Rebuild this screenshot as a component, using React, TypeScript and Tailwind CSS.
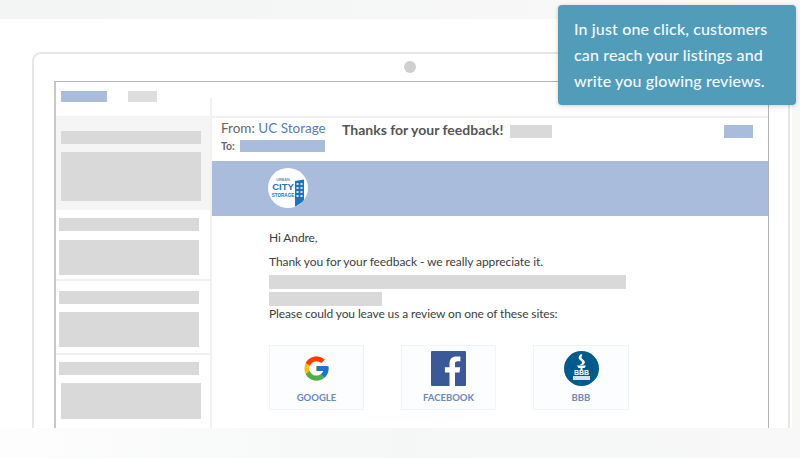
import { FcGoogle } from 'react-icons/fc';

const font = { sans: 'font-["Lato","Noto_Sans",sans-serif]' };

function Bar({ className }: { className: string }) {
  return <div className={`bg-[#d9d9d9] ${className}`} />;
}

function SidebarRow({ className, boxClass }: { className: string; boxClass: string }) {
  return (
    <div className={`flex flex-col border-b-2 border-[#f0f0f0] ${className}`}>
      <Bar className="h-[13px] w-[140px]" />
      <Bar className={boxClass} />
    </div>
  );
}

function FacebookIcon() {
  return (
    <svg viewBox="0 0 35 35" className="w-[35px] h-[35px]">
      <rect width="35" height="35" rx="1" fill="#3b5998" />
      <path d="M24 35V21.5h4.5l.7-5.3H24v-3.3c0-1.5.4-2.6 2.600-2.600h2.800V5.600C29 5.500 27.300 5.400 25.300 5.400c-4.100 0-6.800 2.500-6.800 7v3.800h-4.600v5.300h4.600V35z" fill="#fff" />
    </svg>
  );
}

function BbbIcon() {
  return (
    <svg viewBox="0 0 35 35" className="w-[35px] h-[35px]">
      <circle cx="17.500" cy="17.500" r="17.500" fill="#005a8c" />
      <path d="M17 3c-2 2-3 3-2 5 1 1.500 3 2 3 3.500 0 1-1 2-2.500 2.500h3c2-1 3-2.500 2-4-1-1.500-3-2-3-3.500 0-1 .5-2 1-2.500z" fill="#fff" />
      <path d="M13 14.500h9l-1.500 2.500h-6z" fill="#fff" />
      <rect x="16.500" y="16.500" width="2" height="2.500" fill="#fff" />
      <text x="17.500" y="24" textAnchor="middle" fontSize="7" fontWeight="700" fill="#fff" fontFamily="Liberation Sans, sans-serif">BBB</text>
      <rect x="9" y="25" width="17" height="4" fill="#d5e3ec" />
    </svg>
  );
}

function SiteCard({ label, icon, width }: { label: string; icon: React.ReactNode; width: string }) {
  return (
    <div className={`h-[65px] ${width} border border-[#eef4fa] bg-[#fbfdff] flex flex-col items-center pt-[5px]`}>
      <div className="h-[35px] flex items-center justify-center">{icon}</div>
      <span className="mt-[5px] text-[9.5px] leading-[14px] font-bold text-[#6d88b9]">{label}</span>
    </div>
  );
}

function CityLogo() {
  return (
    <div className="w-[40px] h-[40px] rounded-full bg-white overflow-hidden">
      <svg viewBox="0 0 40 40" className="w-[40px] h-[40px]">
        <text x="15" y="13" textAnchor="middle" fontSize="3.800" fontWeight="700" fill="#7b8fa8" fontFamily="Liberation Sans, sans-serif">URBAN</text>
        <text x="15" y="21.500" textAnchor="middle" fontSize="9.500" fontWeight="700" fill="#1b75bc" fontFamily="Liberation Sans, sans-serif">CITY</text>
        <text x="15" y="28.500" textAnchor="middle" fontSize="4.600" fontWeight="700" fill="#1b75bc" fontFamily="Liberation Sans, sans-serif">STORAGE</text>
        <path d="M27 13l9-1.500V33l-9 6z" fill="#1b75bc" />
        <g fill="#cfe3f5">
          <rect x="28.500" y="15" width="2" height="2" />
          <rect x="32.500" y="15" width="2" height="2" />
          <rect x="28.500" y="19" width="2" height="2" />
          <rect x="32.500" y="19" width="2" height="2" />
          <rect x="28.500" y="23" width="2" height="2" />
          <rect x="32.500" y="23" width="2" height="2" />
          <rect x="28.500" y="27" width="2" height="2" />
          <rect x="32.500" y="27" width="2" height="2" />
        </g>
      </svg>
    </div>
  );
}

export default function App() {
  return (
    <div className={`relative w-[800px] h-[458px] overflow-hidden flex flex-col bg-[#f8f8f7] ${font.sans}`}>
      <div className="h-[19px] shrink-0 bg-gradient-to-r from-[#f2f5f4] to-[#f9f9f8]" />

      {/* white panel with the laptop drawn inside */}
      <div className="h-[409px] w-[792px] shrink-0 bg-white pt-[33px] pl-[32px] overflow-hidden">
        <div className="relative w-[758px] h-[376px] border-2 border-b-0 border-[#e6e6e6] rounded-t-[9px] pt-[27px] pl-[20px]">
          <div className="absolute left-[370px] top-[7px] w-[12px] h-[12px] rounded-full bg-[#cfcfcf]" />

          <div className="w-[715px] h-[347px] border border-b-0 border-[#b5b5b5] border-l-2 border-l-[#c8c8c8] flex">
            {/* left column */}
            <div className="w-[156px] shrink-0 flex flex-col">
              <div className="h-[35px] shrink-0 flex items-start gap-[21px] pl-[5px] pt-[9px] border-b border-[#f0f0f0]">
                <div className="w-[46px] h-[11px] bg-[#a9bcdc]" />
                <div className="w-[29px] h-[11px] bg-[#dedede]" />
                <div className="ml-auto self-end w-[2px] h-[18px] bg-[#f0f0f0]" />
              </div>
              <div className="flex-1 flex flex-col border-r-2 border-[#f0f0f0]">
                <div className="h-[93px] shrink-0 bg-[#f5f5f5] pl-[5px] pt-[14px] flex flex-col gap-[8px]">
                  <Bar className="h-[13px] w-[140px]" />
                  <Bar className="h-[49px] w-[140px]" />
                </div>
                <SidebarRow className="h-[71px] pl-[3px] pt-[8px] gap-[9px]" boxClass="h-[35px] w-[140px]" />
                <SidebarRow className="h-[74px] pl-[3px] pt-[10px] gap-[8px]" boxClass="h-[35px] w-[140px]" />
                <div className="flex flex-col pt-[7px] pl-[3px]">
                  <Bar className="h-[13px] w-[140px]" />
                  <Bar className="h-[36px] w-[140px] ml-[2px] mt-[8px]" />
                </div>
              </div>
            </div>

            {/* message */}
            <div className="flex-1 flex flex-col min-w-0">
              <div className="h-[34px] shrink-0" />
              <div className="h-[45px] shrink-0 border-t-2 border-[#f0f0f0] flex pl-[9px] relative">
                <div className="w-[121px] shrink-0">
                  <div className="text-[13.5px] leading-[20px] text-[#666666] whitespace-nowrap">
                    From: <span className="text-[#5a7cb0]">UC Storage</span>
                  </div>
                  <div className="flex items-center gap-[5px] mt-[2px]">
                    <span className="text-[10.5px] leading-[12px] font-bold text-[#666666]">To:</span>
                    <div className="w-[85px] h-[12px] bg-[#a9bcdc]" />
                  </div>
                </div>
                <div className="pt-[2px] text-[14px] leading-[20px] font-bold text-[#555555] whitespace-nowrap">
                  Thanks for your feedback!
                </div>
                <div className="ml-[7px] mt-[7px] w-[42px] h-[13px] bg-[#d9d9d9]" />
                <div className="ml-auto mr-[15px] mt-[7px] w-[29px] h-[13px] bg-[#a9bcdc]" />
              </div>

              <div className="h-[55px] shrink-0 bg-[#a9bcdc] pl-[56px] pt-[7px]">
                <CityLogo />
              </div>

              <div className="pl-[57px] pt-[14px] text-[12px] text-[#3d3d3d]">
                <div className="leading-[16px] tracking-[-0.1px]">Hi Andre,</div>
                <div className="leading-[16px] mt-[8px] tracking-[-0.08px]">Thank you for your feedback - we really appreciate it.</div>
                <div className="mt-[5px] h-[14px] w-[357px] bg-[#d9d9d9]" />
                <div className="mt-[3px] h-[14px] w-[113px] bg-[#d9d9d9]" />
                <div className="leading-[16px] tracking-[-0.12px]">Please could you leave us a review on one of these sites:</div>
                <div className="flex gap-[37px] mt-[23px]">
                  <SiteCard label="GOOGLE" width="w-[95px]" icon={<FcGoogle className="w-[29px] h-[29px]" />} />
                  <SiteCard label="FACEBOOK" width="w-[95px]" icon={<FacebookIcon />} />
                  <SiteCard label="BBB" width="w-[96px]" icon={<BbbIcon />} />
                </div>
              </div>
            </div>
          </div>
        </div>
      </div>

      <div className="flex-1 bg-gradient-to-r from-[#fdfdfd] via-[#f5f7f6] to-[#f7f8f7]" />

      {/* callout */}
      <div className="absolute left-[558px] top-[5px] w-[238px] h-[100px] rounded-[4px] bg-[#519cb9] shadow-[0_1px_4px_rgba(0,0,0,0.2)] pl-[16px] pt-[11px] text-[16px] leading-[26px] font-medium tracking-[0.14px] text-[#f3f9fb] whitespace-nowrap">
        In just one click, customers
        <br />
        can reach your listings and
        <br />
        write you glowing reviews.
      </div>
    </div>
  );
}
